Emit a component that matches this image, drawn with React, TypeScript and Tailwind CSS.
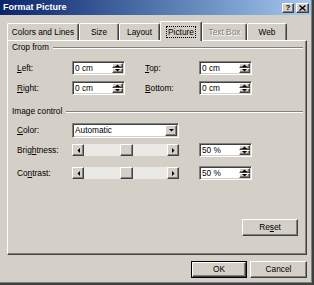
import React from 'react'

const raised =
  'bg-[#d4d0c8] border border-t-white border-l-white border-r-[#404040] border-b-[#404040] shadow-[inset_-1px_-1px_0_#808080]'
const sunken =
  'bg-white border border-t-[#808080] border-l-[#808080] border-r-white border-b-white shadow-[inset_1px_1px_0_#404040,inset_-1px_-1px_0_#d4d0c8]'

const Tri = ({ dir }: { dir: 'up' | 'down' | 'left' | 'right' }) => {
  const pts = {
    up: '0,3 5,3 2.5,0.5',
    down: '0,0 5,0 2.5,2.5',
    left: '3,0 3,5 0.5,2.5',
    right: '0,0 0,5 2.5,2.5',
  }[dir]
  const v = dir === 'up' || dir === 'down'
  return (
    <svg width={v ? 5 : 3} height={v ? 3 : 5} viewBox={v ? '0 0 5 3' : '0 0 3 5'}>
      <polygon points={pts} fill="#000" />
    </svg>
  )
}

const Spin = ({ value, w = 'w-[53px]' }: { value: string; w?: string }) => (
  <div className={`${sunken} ${w} h-[14px] flex items-stretch`}>
    <span className="flex-1 pl-[2px] pt-[1px] leading-[10px]">{value}</span>
    <div className="flex flex-col w-[11px] my-[1px] mr-[1px]">
      <div className={`${raised} flex-1 flex items-center justify-center`}>
        <Tri dir="up" />
      </div>
      <div className={`${raised} flex-1 flex items-center justify-center`}>
        <Tri dir="down" />
      </div>
    </div>
  </div>
)

const Slider = () => (
  <div className="w-[107px] h-[12px] flex bg-[#ebe9e5]">
    <div className={`${raised} w-[12px] flex items-center justify-center`}>
      <Tri dir="left" />
    </div>
    <div className="w-[36px]" />
    <div className={`${raised} w-[13px]`} />
    <div className="flex-1" />
    <div className={`${raised} w-[12px] flex items-center justify-center`}>
      <Tri dir="right" />
    </div>
  </div>
)

const Header = ({ text }: { text: string }) => (
  <div className="flex items-center h-[11px] pl-[4px] pr-[3px]">
    <span>{text}</span>
    <div className="flex-1 ml-[4px] border-t border-t-[#808080] border-b border-b-white" />
  </div>
)

const Label = ({ pre, u, post, w = 'w-[55px]' }: { pre: string; u: string; post: string; w?: string }) => (
  <span className={w}>
    {pre}
    <span className="underline underline-offset-[1px]">{u}</span>
    {post}
  </span>
)

const Tab = ({ label, w, selected, disabled }: { label: string; w: string; selected?: boolean; disabled?: boolean }) => (
  <div
    className={`${w} flex items-center justify-center rounded-t-[2px] border-t border-l border-t-white border-l-white border-r border-r-[#404040] shadow-[inset_-1px_0_0_#808080] bg-[#d4d0c8] ${
      selected ? 'h-[20px] -mb-px relative z-10' : 'h-[17px]'
    }`}
  >
    {selected ? (
      <span className="border border-dotted border-black px-[1px] leading-[10px]">{label}</span>
    ) : (
      <span className={disabled ? 'text-[#808080] [text-shadow:1px_1px_0_#fff]' : ''}>{label}</span>
    )}
  </div>
)

const Button = ({ children, w, def }: { children: React.ReactNode; w: string; def?: boolean }) =>
  def ? (
    <div className={`${w} h-[17px] border border-black flex`}>
      <div className={`${raised} flex-1 flex items-center justify-center`}>{children}</div>
    </div>
  ) : (
    <div className={`${raised} ${w} h-[17px] flex items-center justify-center`}>{children}</div>
  )

export default function App() {
  return (
    <div className="w-[314px] h-[285px] bg-[#d4d0c8] border-r-2 border-b-2 border-r-[#404040] border-b-[#404040] shadow-[inset_-1px_-1px_0_#808080] overflow-hidden font-['Liberation_Sans',Arial,sans-serif] text-[8.3px] leading-none text-black">
      {/* Title bar */}
      <div className="h-[15px] w-[311px] flex items-center bg-gradient-to-r from-[#0a246a] to-[#a6caf0] pl-[3px] pr-[2px]">
        <span className="text-white font-bold text-[9px]">Format Picture</span>
        <div className="ml-auto flex gap-[2px]">
          <div className={`${raised} w-[12px] h-[10px] flex items-center justify-center font-bold text-[8px]`}>?</div>
          <div className={`${raised} w-[13px] h-[10px] flex items-center justify-center`}>
            <svg width="7" height="6" viewBox="0 0 7 6">
              <path d="M0.5 0.5 L6.5 5.5 M6.5 0.5 L0.5 5.5" stroke="#000" strokeWidth="1.4" />
            </svg>
          </div>
        </div>
      </div>

      {/* Tabs */}
      <div className="mt-[6px] h-[19px] pl-[7px] flex items-end">
        <Tab label="Colors and Lines" w="w-[72px]" />
        <Tab label="Size" w="w-[40px]" />
        <Tab label="Layout" w="w-[41px]" />
        <Tab label="Picture" w="w-[42px]" selected />
        <Tab label="Text Box" w="w-[45px]" disabled />
        <Tab label="Web" w="w-[40px]" />
      </div>

      {/* Panel */}
      <div className="ml-[7px] w-[300px] h-[215px] border-t border-l border-t-white border-l-white border-r border-b border-r-[#404040] border-b-[#404040] shadow-[inset_-1px_-1px_0_#808080] flex flex-col">
        <div className="mt-[1px]">
          <Header text="Crop from" />
        </div>
        <div className="mt-[8px] pl-[9px] flex items-center h-[14px]">
          <Label pre="" u="L" post="eft:" />
          <Spin value="0 cm" />
          <span className="ml-[20px]" />
          <Label pre="" u="T" post="op:" w="w-[54px]" />
          <Spin value="0 cm" />
        </div>
        <div className="mt-[6px] pl-[9px] flex items-center h-[14px]">
          <Label pre="" u="R" post="ight:" />
          <Spin value="0 cm" />
          <span className="ml-[20px]" />
          <Label pre="" u="B" post="ottom:" w="w-[54px]" />
          <Spin value="0 cm" />
        </div>
        <div className="mt-[11px]">
          <Header text="Image control" />
        </div>
        <div className="mt-[6px] pl-[9px] flex items-center h-[15px]">
          <Label pre="" u="C" post="olor:" />
          <div className={`${sunken} w-[107px] h-[15px] flex items-stretch`}>
            <span className="flex-1 pl-[2px] flex items-center">Automatic</span>
            <div className={`${raised} w-[12px] m-[1px] flex items-center justify-center`}>
              <Tri dir="down" />
            </div>
          </div>
        </div>
        <div className="mt-[5px] pl-[9px] flex items-center h-[14px]">
          <Label pre="Brig" u="h" post="tness:" />
          <Slider />
          <span className="ml-[20px]" />
          <Spin value="50 %" />
        </div>
        <div className="mt-[9px] pl-[9px] flex items-center h-[14px]">
          <Label pre="Co" u="n" post="trast:" />
          <Slider />
          <span className="ml-[20px]" />
          <Spin value="50 %" />
        </div>
        <div className="mt-[39px] flex justify-end pr-[8px]">
          <Button w="w-[56px]">
            Re<span className="underline underline-offset-[1px]">s</span>et
          </Button>
        </div>
      </div>

      {/* Dialog buttons */}
      <div className="mt-[6px] flex justify-end gap-[3px] pr-[5px]">
        <Button w="w-[56px]" def>
          OK
        </Button>
        <Button w="w-[57px]">Cancel</Button>
      </div>
    </div>
  )
}
